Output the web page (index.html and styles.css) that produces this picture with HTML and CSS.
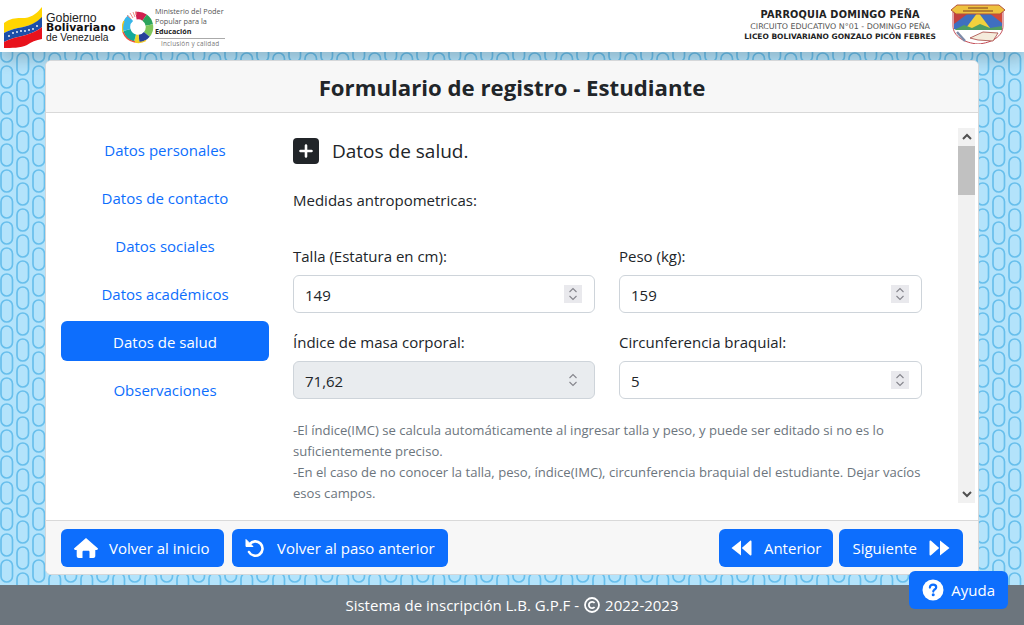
FILE: index.html
```html
<!DOCTYPE html>
<html lang="es">
<head>
    <meta charset="UTF-8">
    <meta name="viewport" content="width=device-width, initial-scale=1.0">
    <title>Formulario de registro - Estudiante</title>
    <link rel="stylesheet" href="styles.css">
</head>
<body>
    <!-- Cintillo -->
    <header class="topbar">
        <div class="logos">
            <svg class="flag" viewBox="0 0 40 44" width="40" height="44">
                <path d="M1 17C9 11 16 12 22 12C30 11 35 6 39 1V12C33 17 27 20 15 22C9 23 5 25 1 27Z" fill="#ffd500"/>
                <path d="M1 27C5 25 9 23 15 22C27 20 33 17 39 11V21C33 26 27 28 15 31C9 32 5 34 1 36Z" fill="#1d4fa8"/>
                <path d="M1 36C5 34 9 32 15 31C27 28 33 26 39 21V33C33 34 28 36 24 39C18 42 8 42 1 42Z" fill="#e8121c"/>
                <g fill="#fff">
                    <circle cx="6" cy="30" r=".9"/><circle cx="10" cy="27" r=".9"/><circle cx="14" cy="26" r=".9"/>
                    <circle cx="18" cy="25" r=".9"/><circle cx="22" cy="25" r=".9"/><circle cx="26" cy="24" r=".9"/>
                    <circle cx="30" cy="23" r=".9"/><circle cx="34" cy="20" r=".9"/>
                </g>
            </svg>
            <div class="gob">
                <span>Gobierno</span>
                <strong>Bolivariano</strong>
                <span class="gob-small">de Venezuela</span>
            </div>
            <svg class="ring" viewBox="0 0 32 34" width="32" height="34">
                <g fill="none" stroke-width="7.5">
                    <path d="M14 5.7A11.5 11.5 0 0 1 22.6 7.6" stroke="#d0204f"/>
                    <path d="M22.6 7.6A11.5 11.5 0 0 1 27.3 15" stroke="#2ba35a"/>
                    <path d="M27.3 15A11.5 11.5 0 0 1 24.8 24.4" stroke="#7fc65a"/>
                    <path d="M24.8 24.4A11.5 11.5 0 0 1 17 28.5" stroke="#27409a"/>
                    <path d="M17 28.5A11.5 11.5 0 0 1 13 28.1" stroke="#e8d62a"/>
                    <path d="M13 28.1A11.5 11.5 0 0 1 4.9 20" stroke="#14a99a"/>
                    <path d="M4.9 20A11.5 11.5 0 0 1 8.6 8.2" stroke="#38b6e8"/>
                </g>
                <path d="M1 22A15.5 15.5 0 0 0 13 32" fill="none" stroke="#f0503c" stroke-width="1.4"/>
                <path d="M13 32A15.5 15.5 0 0 0 24 30.5" fill="none" stroke="#f2c81e" stroke-width="1.4"/>
                <path d="M1 22A15.5 15.5 0 0 1 2 11" fill="none" stroke="#f2c81e" stroke-width="1.4"/>
                <path d="M5 5L9 9M8 3L11 8M11 2L13 7M14 1V5" stroke="#ee8f86" stroke-width="1"/>
            </svg>
            <div class="mppe">
                <span>Ministerio del Poder</span>
                <span>Popular para la</span>
                <strong>Educación</strong>
                <em>Inclusión y calidad</em>
            </div>
        </div>
        <div class="school">
            <div class="school-text">
                <strong class="parish">PARROQUIA DOMINGO PEÑA</strong>
                <span class="circuit">CIRCUITO EDUCATIVO N°01 - DOMINGO PEÑA</span>
                <strong class="liceo">LICEO BOLIVARIANO GONZALO PICÓN FEBRES</strong>
            </div>
            <svg class="crest" viewBox="0 0 56 40" width="56" height="40">
                <path d="M3 8V22C3 32 14 39 28 40C42 39 53 32 53 22V8Z" fill="#fff" stroke="#c24b55"/>
                <path d="M4 8H52V25H4Z" fill="#3f6fc0"/>
                <path d="M4 8H20L4 20Z" fill="#c2403f"/>
                <path d="M52 8H38L52 19Z" fill="#d24a3a"/>
                <path d="M16 24L28 8L40 24Z" fill="#f2d13d"/>
                <path d="M4 26L14 21L22 24L30 20L40 24L52 22V26Z" fill="#4f9d62"/>
                <path d="M20 34L33 28L48 29L43 37L28 36Z" fill="#f5ecdc" stroke="#a5443f" stroke-width=".8"/>
                <path d="M7 28L15 37" stroke="#7d8aa8" stroke-width="2.4"/>
                <path d="M1 6L7 1H49L55 6L50 10H6Z" fill="#eec23f" stroke="#b3533b"/>
                <path d="M18 4H38M13 7H43" stroke="#7a3a20" stroke-width="1"/>
            </svg>
        </div>
    </header>

    <main class="page">
        <section class="card">
            <h1 class="card-title">Formulario de registro - Estudiante</h1>

            <div class="card-body">
                <!-- Pasos -->
                <nav class="steps">
                    <a href="#">Datos personales</a>
                    <a href="#">Datos de contacto</a>
                    <a href="#">Datos sociales</a>
                    <a href="#">Datos académicos</a>
                    <a href="#" class="active">Datos de salud</a>
                    <a href="#">Observaciones</a>
                </nav>

                <div class="scroller">
                    <form class="form">
                        <h2 class="form-title">
                            <span class="plus-box">
                                <svg viewBox="0 0 16 16" width="16" height="16"><path d="M8 2.5V13.5M2.5 8H13.5" stroke="#fff" stroke-width="2.6" stroke-linecap="round"/></svg>
                            </span>
                            Datos de salud.
                        </h2>
                        <p class="subtitle">Medidas antropometricas:</p>

                        <div class="fields">
                            <div class="field">
                                <label for="talla">Talla (Estatura en cm):</label>
                                <div class="input-wrap">
                                    <input id="talla" type="number" value="149">
                                    <span class="spin"><svg viewBox="0 0 10 14" width="10" height="14"><path d="M1.5 5L5 1.5L8.5 5M1.5 9L5 12.5L8.5 9" fill="none" stroke="#85858c" stroke-width="1.1"/></svg></span>
                                </div>
                            </div>
                            <div class="field">
                                <label for="peso">Peso (kg):</label>
                                <div class="input-wrap">
                                    <input id="peso" type="number" value="159">
                                    <span class="spin"><svg viewBox="0 0 10 14" width="10" height="14"><path d="M1.5 5L5 1.5L8.5 5M1.5 9L5 12.5L8.5 9" fill="none" stroke="#85858c" stroke-width="1.1"/></svg></span>
                                </div>
                            </div>
                            <div class="field">
                                <label for="imc">Índice de masa corporal:</label>
                                <div class="input-wrap">
                                    <input id="imc" type="text" value="71,62" disabled>
                                    <span class="spin spin-off"><svg viewBox="0 0 10 14" width="10" height="14"><path d="M1.5 5L5 1.5L8.5 5M1.5 9L5 12.5L8.5 9" fill="none" stroke="#85858c" stroke-width="1.1"/></svg></span>
                                </div>
                            </div>
                            <div class="field">
                                <label for="cb">Circunferencia braquial:</label>
                                <div class="input-wrap">
                                    <input id="cb" type="number" value="5">
                                    <span class="spin"><svg viewBox="0 0 10 14" width="10" height="14"><path d="M1.5 5L5 1.5L8.5 5M1.5 9L5 12.5L8.5 9" fill="none" stroke="#85858c" stroke-width="1.1"/></svg></span>
                                </div>
                            </div>
                        </div>

                        <p class="help">-El índice(IMC) se calcula automáticamente al ingresar talla y peso, y puede ser editado si no es lo suficientemente preciso.<br>-En el caso de no conocer la talla, peso, índice(IMC), circunferencia braquial del estudiante. Dejar vacíos esos campos.</p>
                    </form>

                    <div class="scrollbar">
                        <span class="scroll-arrow">
                            <svg viewBox="0 0 10 8" width="10" height="8"><path d="M1 6L5 2L9 6" fill="none" stroke="#505050" stroke-width="2"/></svg>
                        </span>
                        <span class="scroll-thumb"></span>
                        <span class="scroll-track"></span>
                        <span class="scroll-arrow">
                            <svg viewBox="0 0 10 8" width="10" height="8"><path d="M1 2L5 6L9 2" fill="none" stroke="#505050" stroke-width="2"/></svg>
                        </span>
                    </div>
                </div>
            </div>

            <div class="card-footer">
                <div class="btn-group">
                    <a href="#" class="btn btn-home">
                        <svg viewBox="0 0 24 20" width="24" height="20"><path d="M12 0L24 10.6C24 11.6 23.4 12 22.6 12H21.3V18C21.3 19.2 20.4 20 19.3 20H15.5V14C15.5 13.3 15 12.8 14.3 12.8H9.7C9 12.8 8.5 13.3 8.5 14V20H4.7C3.6 20 2.7 19.2 2.7 18V12H1.4C.6 12 0 11.6 0 10.6Z" fill="#fff"/></svg>
                        Volver al inicio
                    </a>
                    <a href="#" class="btn">
                        <svg viewBox="0 0 20 20" width="20" height="20"><path d="M4.6 6.2A7.2 7.2 0 1 1 4 14" fill="none" stroke="#fff" stroke-width="2.6" stroke-linecap="round"/><path d="M1 1.5V8.5H8Z" fill="#fff" stroke="#fff" stroke-linejoin="round"/></svg>
                        Volver al paso anterior
                    </a>
                </div>
                <div class="btn-group btn-group-nav">
                    <a href="#" class="btn btn-prev">
                        <svg viewBox="0 0 21 16" width="21" height="16"><path d="M10 0.5V15.5L0.5 8ZM20.5 1.5V14.5C20.5 15.5 19.8 15.8 19 15.3L10.8 8L19 .7C19.8 .2 20.5 .5 20.5 1.5Z" fill="#fff"/></svg>
                        Anterior
                    </a>
                    <a href="#" class="btn">
                        Siguiente
                        <svg viewBox="0 0 21 16" width="21" height="16"><path d="M11 0.5V15.5L20.5 8ZM.5 1.5V14.5C.5 15.5 1.2 15.8 2 15.3L10.2 8L2 .7C1.2 .2 .5 .5 .5 1.5Z" fill="#fff"/></svg>
                    </a>
                </div>
            </div>
        </section>
    </main>

    <footer class="footer">
        Sistema de inscripción L.B. G.P.F -
        <svg viewBox="0 0 16 16" width="16" height="16"><circle cx="8" cy="8" r="7" fill="none" stroke="#fff" stroke-width="1.8"/><path d="M10.6 6A3.2 3.2 0 1 0 10.6 10" fill="none" stroke="#fff" stroke-width="1.8"/></svg>
        2022-2023
    </footer>

    <a href="#" class="help-btn">
        <svg viewBox="0 0 22 22" width="22" height="22"><circle cx="11" cy="11" r="10.5" fill="#fff"/><path d="M7.9 8.6C7.9 6.8 9.3 5.6 11.1 5.6C12.9 5.6 14.2 6.7 14.2 8.2C14.2 9.9 12.8 10.3 12 11C11.5 11.4 11.3 11.8 11.3 12.6" fill="none" stroke="#0d6efd" stroke-width="2.2" stroke-linecap="round"/><circle cx="11.2" cy="15.8" r="1.5" fill="#0d6efd"/></svg>
        Ayuda
    </a>
</body>
</html>
```

FILE: styles.css
```css
* {
    box-sizing: border-box;
}
body {
    font-family: "Open Sans", "Noto Sans", sans-serif;
    font-size: 15px;
    color: #212529;
    display: flex;
    flex-direction: column;
    height: 100vh;
    margin: 0;
    overflow: hidden;
}
a {
    text-decoration: none;
}

/* Cintillo */
.topbar {
    height: 52px;
    flex: none;
    background: white;
    display: flex;
    justify-content: space-between;
    align-items: center;
    position: relative;
    z-index: 1;
    box-shadow: 0 8px 14px rgba(0, 0, 0, 0.18);
}
.logos {
    display: flex;
    align-items: center;
    padding-left: 3px;
}
.flag {
    margin-top: 3px;
}
.gob {
    display: flex;
    flex-direction: column;
    margin-left: 3px;
    font-family: "Liberation Sans", sans-serif;
    font-size: 12.3px;
    line-height: 10px;
    color: #222;
    width: 73px;
    padding-top: 3px;
    white-space: nowrap;
}
.gob strong {
    font-family: "DejaVu Sans", sans-serif;
    font-size: 10.9px;
    color: #111;
}
.gob-small {
    font-size: 10.3px;
}
.ring {
    margin: 2px 0 0 3px;
}
.mppe {
    display: flex;
    flex-direction: column;
    margin-left: 1px;
    font-family: "Open Sans", sans-serif;
    font-size: 7.3px;
    line-height: 9.8px;
    color: #555;
    width: 70px;
    margin-top: 4px;
}
.mppe strong {
    color: #222;
    font-size: 7.2px;
}
.mppe em {
    font-style: normal;
    font-size: 6.4px;
    letter-spacing: 0.2px;
    color: #777;
    border-top: 1px solid #aaa;
    margin-top: 2px;
    padding-left: 6px;
}
.school {
    display: flex;
    align-items: center;
    padding-right: 18px;
}
.school-text {
    display: flex;
    flex-direction: column;
    align-items: center;
    font-family: "DejaVu Sans", sans-serif;
    color: #222;
    margin-right: 14px;
    margin-bottom: 3px;
}
.parish {
    font-size: 9.75px;
    line-height: 13px;
    letter-spacing: 0.2px;
}
.circuit {
    font-size: 7.92px;
    line-height: 11px;
    color: #555;
}
.liceo {
    font-size: 7.48px;
    line-height: 10px;
}
.crest {
    margin-bottom: 4px;
}

/* Fondo */
.page {
    flex: 1;
    min-height: 0;
    padding: 8px 45px 10px;
    display: flex;
    background-color: #b3e3fb;
    background-image: url("data:image/svg+xml,%3Csvg xmlns='http://www.w3.org/2000/svg' width='32' height='26'%3E%3Cg fill='none' stroke='%2368bfec' stroke-width='1.7'%3E%3Crect x='1' y='14' width='11.5' height='22' rx='5.75'/%3E%3Crect x='1' y='-12' width='11.5' height='22' rx='5.75'/%3E%3Crect x='17' y='1' width='11.5' height='22' rx='5.75'/%3E%3C/g%3E%3C/svg%3E");
    background-position: 0 0;
}

/* Tarjeta */
.card {
    flex: 1;
    position: relative;
    z-index: 2;
    background: white;
    border: 1px solid #d5d7d9;
    border-radius: 6px;
    display: flex;
    flex-direction: column;
    overflow: hidden;
}
.card-title {
    height: 52px;
    flex: none;
    margin: 0;
    background: #f7f7f7;
    border-bottom: 1px solid #d9d9d9;
    font-size: 22.2px;
    font-weight: 700;
    text-align: center;
    line-height: 53px;
}
.card-body {
    flex: 1;
    min-height: 0;
    display: flex;
    padding: 15px 3px 17px 15px;
}
.steps {
    width: 208px;
    flex: none;
    margin-right: 12px;
    display: flex;
    flex-direction: column;
    gap: 8px;
    padding-top: 1px;
}
.steps a {
    height: 40px;
    line-height: 42px;
    text-align: center;
    color: #0d6efd;
    border-radius: 6px;
}
.steps a.active {
    background: #0d6efd;
    color: white;
}
.scroller {
    flex: 1;
    min-width: 0;
    display: flex;
    overflow: hidden;
}
.form {
    flex: 1;
    min-width: 0;
    padding: 10px 36px 0 12px;
    overflow: hidden;
}
.form-title {
    display: flex;
    align-items: center;
    gap: 13px;
    height: 26px;
    margin: 0;
    font-size: 19px;
    font-weight: 400;
}
.plus-box {
    width: 26px;
    height: 26px;
    background: #212529;
    border-radius: 4px;
    display: flex;
    align-items: center;
    justify-content: center;
}
.subtitle {
    margin: 24px 0 0;
    line-height: 24px;
}
.fields {
    display: grid;
    grid-template-columns: 302px 303px;
    column-gap: 24px;
    row-gap: 17px;
    margin-top: 32px;
}
.field label {
    display: block;
    line-height: 24px;
    margin-bottom: 7px;
}
.input-wrap {
    position: relative;
}
.input-wrap input {
    display: block;
    width: 100%;
    height: 38px;
    padding: 7px 11px 6px;
    font-family: inherit;
    font-size: 15px;
    color: #212529;
    background: white;
    border: 1px solid #ced4da;
    border-radius: 6px;
    appearance: textfield;
}
.input-wrap input:disabled {
    background: #e9ecef;
}
.spin {
    position: absolute;
    right: 13px;
    top: 10px;
    width: 18px;
    height: 18px;
    background: #e9e9ed;
    display: flex;
    align-items: center;
    justify-content: center;
}
.spin-off {
    background: none;
}
.help {
    margin: 21px 0 0;
    font-size: 13.1px;
    line-height: 21px;
    color: #6c757d;
}

/* Barra de desplazamiento */
.scrollbar {
    width: 17px;
    flex: none;
    display: flex;
    flex-direction: column;
    background: #f1f1f1;
}
.scroll-arrow {
    height: 18px;
    flex: none;
    display: flex;
    align-items: center;
    justify-content: center;
}
.scroll-thumb {
    height: 49px;
    flex: none;
    background: #c1c1c1;
}
.scroll-track {
    flex: 1;
}

/* Botones */
.card-footer {
    height: 54px;
    flex: none;
    display: flex;
    justify-content: space-between;
    padding: 8px 15px 0;
    background: #f7f7f7;
    border-top: 1px solid #d9d9d9;
}
.btn-group {
    display: flex;
    gap: 8px;
}
.btn-group-nav {
    gap: 6px;
}
.btn {
    height: 38px;
    display: flex;
    align-items: center;
    gap: 12px;
    padding: 0 13px;
    background: #0d6efd;
    color: white;
    border-radius: 6px;
}
.btn-home {
    width: 163px;
    gap: 11px;
}
.btn-prev {
    padding: 0 12px;
}
.footer {
    height: 40px;
    flex: none;
    background: #6c757d;
    color: white;
    display: flex;
    align-items: center;
    justify-content: center;
    gap: 5px;
}
.help-btn {
    position: fixed;
    right: 16px;
    bottom: 16px;
    z-index: 3;
    height: 38px;
    display: flex;
    align-items: center;
    gap: 7px;
    padding: 0 13px;
    background: #0d6efd;
    color: white;
    border-radius: 6px;
}
```
